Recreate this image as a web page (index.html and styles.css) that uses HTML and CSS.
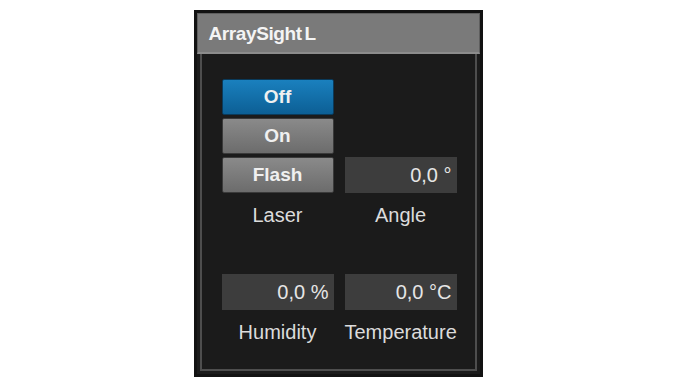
FILE: index.html
```html
<!DOCTYPE html>
<html lang="en">
<head>
    <meta charset="UTF-8">
    <meta name="viewport" content="width=device-width, initial-scale=1.0">
    <title>ArraySight L</title>
    <link rel="stylesheet" href="styles.css">
</head>
<body>

<div class="panel">
    <div class="panel-header">ArraySight L</div>
    <div class="panel-body">
        <div class="row">
            <div class="cell">
                <div class="buttons">
                    <button class="btn active">Off</button>
                    <button class="btn">On</button>
                    <button class="btn">Flash</button>
                </div>
                <div class="label">Laser</div>
            </div>
            <div class="cell">
                <div class="value">0,0 °</div>
                <div class="label">Angle</div>
            </div>
        </div>
        <div class="row second">
            <div class="cell">
                <div class="value">0,0 %</div>
                <div class="label">Humidity</div>
            </div>
            <div class="cell">
                <div class="value">0,0 °C</div>
                <div class="label">Temperature</div>
            </div>
        </div>
    </div>
</div>

</body>
</html>
```

FILE: styles.css
```css
body {
    margin: 0;
    background-color: #fff;
    font-family: "Liberation Sans", Arial, sans-serif;
    display: flex;
    justify-content: center;
    padding-top: 10px;
}
.panel {
    width: 283px;
    height: 361px;
    margin-left: -3px;
    border: 3px solid #121212;
    background-color: #1b1b1b;
    display: flex;
    flex-direction: column;
}
.panel-header {
    height: 38px;
    line-height: 40px;
    padding-left: 11px;
    background-color: #7a7a7a;
    border: 1px solid #5e5e5e;
    border-bottom: 2px solid #8c8c8c;
    color: #f4f4f4;
    font-weight: bold;
    font-size: 19px;
    letter-spacing: -0.4px;
    word-spacing: -2px;
}
.panel-body {
    flex: 1;
    margin: 0 3px 3px 3px;
    border: 2px solid #4e4e4e;
    border-top: none;
    padding: 25px 0 0 20px;
}
.row {
    display: flex;
    gap: 11px;
}
.row.second {
    margin-top: 40px;
}
.cell {
    width: 112px;
    display: flex;
    flex-direction: column;
    justify-content: flex-end;
}
.buttons {
    display: flex;
    flex-direction: column;
    gap: 3px;
}
.btn {
    height: 36px;
    border: 1px solid #3a3a3a;
    border-radius: 2px;
    background: linear-gradient(#8a8a8a, #6c6c6c);
    color: #f0f0f0;
    font-family: "Liberation Sans", Arial, sans-serif;
    font-weight: bold;
    font-size: 19px;
    padding: 0;
}
.btn.active {
    background: linear-gradient(#1a80be, #0c5f95);
    border-color: #0a3a5a;
}
.value {
    height: 36px;
    line-height: 37px;
    background-color: #3d3d3d;
    color: #e6e6e6;
    font-size: 20px;
    text-align: right;
    padding-right: 5px;
}
.label {
    margin-top: 11px;
    height: 30px;
    color: #dcdcdc;
    font-size: 20px;
    text-align: center;
}
```
